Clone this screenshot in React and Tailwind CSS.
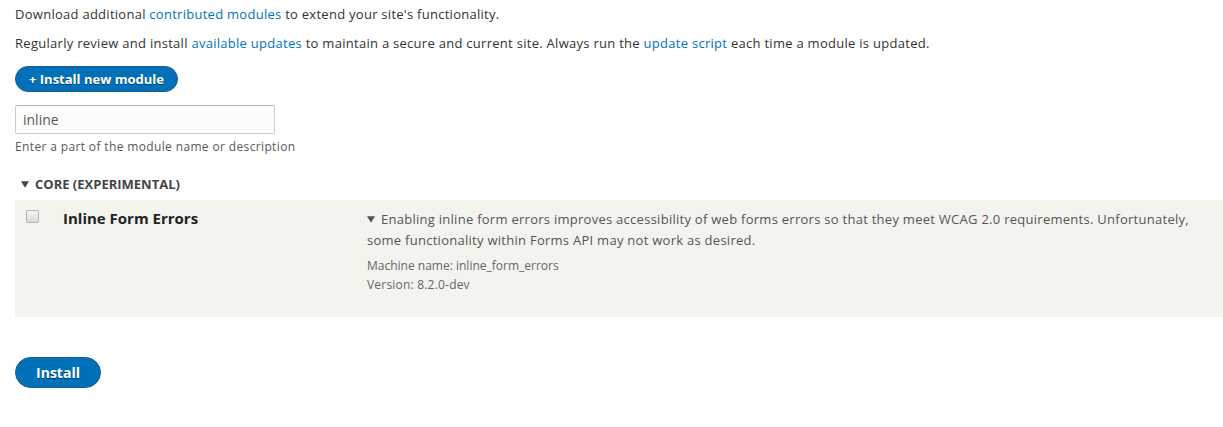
import React from 'react';

const font = { fontFamily: '"Open Sans", "Noto Sans", sans-serif' };

const Caret = ({ className }) => (
  <svg viewBox="0 0 10 8" className={className} aria-hidden="true">
    <path d="M0 0h10L5 8z" fill="currentColor" />
  </svg>
);

const App = () => {
  return (
    <div className="min-h-screen bg-white text-[13px] text-[#333] pl-[15px] pt-[5px]" style={font}>
      <p className="leading-[18px] mb-[11px] tracking-[0.27px]">
        Download additional <a className="text-[#0074bd]">contributed modules</a> to extend your site's functionality.
      </p>
      <p className="leading-[18px] mb-[14px] tracking-[0.28px]">
        Regularly review and install <a className="text-[#0074bd]">available updates</a> to maintain a secure and
        current site. Always run the <a className="text-[#0074bd]">update script</a> each time a module is updated.
      </p>

      {/* Install new module */}
      <button className="h-[26px] px-[13px] rounded-full bg-[#0071b8] border border-[#1e5c90] text-white font-bold text-[13px] leading-none [text-shadow:0_1px_0_rgba(0,0,0,0.5)]">
        + Install new module
      </button>

      {/* Filter */}
      <div className="mt-[13px]">
        <input
          type="text"
          defaultValue="inline"
          className="w-[260px] h-[29px] px-[7px] border border-[#ccc] border-t-[#b4b4b4] rounded-[2px] bg-[#fcfcfa] text-[14px] text-[#595959] outline-none"
          style={font}
        />
        <p className="text-[12px] text-[#595959] leading-[18px] mt-[4px] tracking-[0.36px]">
          Enter a part of the module name or description
        </p>
      </div>

      {/* Package */}
      <div className="mt-[19px]">
        <div className="flex items-center gap-[6px] pl-[6px] font-bold text-[13px] text-[#444] leading-[18px] mb-[7px]">
          <Caret className="w-[8px] h-[7px]" />
          <span>CORE (EXPERIMENTAL)</span>
        </div>
        <div className="bg-[#f3f4ee] h-[117px] flex">
          <div className="w-[48px] pl-[11px] pt-[10px]">
            <input
              type="checkbox"
              className="appearance-none block w-[13px] h-[13px] rounded-[2px] border border-[#b3b3b3] bg-gradient-to-b from-[#f4f4f4] to-[#dcdcdc]"
            />
          </div>
          <div className="w-[304px] pt-[8px] font-bold text-[15px] text-[#222] leading-[20px]">Inline Form Errors</div>
          <div className="flex-1 pt-[9px] pr-[30px] text-[13px] text-[#555] tracking-[0.27px]">
            <p className="leading-[21px]">
              <Caret className="inline-block w-[8px] h-[7px] mr-[6px] align-[1px]" />
              Enabling inline form errors improves accessibility of web forms errors so that they meet WCAG 2.0
              requirements. Unfortunately, some functionality within Forms API may not work as desired.
            </p>
            <div className="mt-[5px] text-[12px] text-[#666] leading-[19px] tracking-normal">
              <div>Machine name: inline_form_errors</div>
              <div className="tracking-[0.2px]">Version: 8.2.0-dev</div>
            </div>
          </div>
        </div>
      </div>

      <button className="mt-[40px] h-[31px] w-[86px] rounded-full bg-[#0071b8] border border-[#1e5c90] text-white font-bold text-[14px] leading-none [text-shadow:0_1px_0_rgba(0,0,0,0.5)]">
        Install
      </button>
    </div>
  );
};

export default App;
